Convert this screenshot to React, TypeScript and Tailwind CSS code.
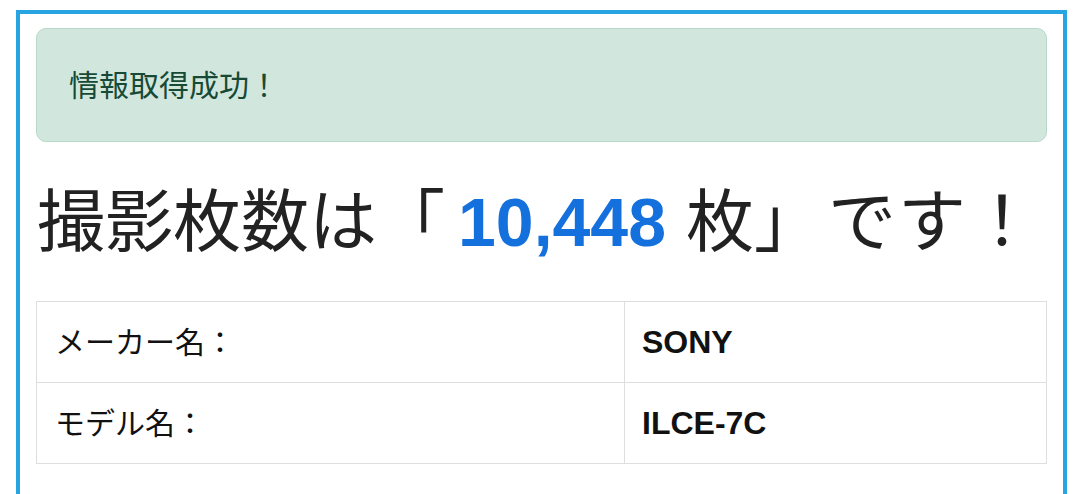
const jp = { fontFamily: '"Liberation Sans", "Noto Sans CJK JP", sans-serif' };

const rows = [
    { label: 'メーカー名：', value: 'SONY' },
    { label: 'モデル名：', value: 'ILCE-7C' },
];

export default function App() {
    return (
        <div className="w-[1080px] h-[494px] bg-white overflow-hidden pt-[10px] pl-[16px]" style={jp}>
            <div className="w-[1051px] h-[520px] border-4 border-[#27a4e2] px-[16px] pt-[14px]">
                <div className="h-[114px] flex items-center px-[32px] rounded-[10px] border border-[#b7d9c9] bg-[#d1e7dd] text-[#174a36] text-[30px]">
                    情報取得成功！
                </div>

                <div className="h-[159px] flex items-center pl-[1px] text-[68px] leading-none text-[#222222] whitespace-nowrap">
                    撮影枚数は「<span className="ml-[13px] font-bold text-[#1470dc]">10,448</span>
                    <span className="ml-[20px]">枚」</span>
                    <span className="ml-[6px] tracking-[2px]">です！</span>
                </div>

                <table className="w-full border-collapse">
                    <tbody>
                        {rows.map((r) => (
                            <tr key={r.label} className="h-[81px]">
                                <td className="w-[588px] border border-[#dedede] pl-[18px] text-[30px] text-[#111111]">
                                    {r.label}
                                </td>
                                <td className="border border-[#dedede] pl-[17px] text-[32px] font-bold text-[#111111]">
                                    {r.value}
                                </td>
                            </tr>
                        ))}
                    </tbody>
                </table>
            </div>
        </div>
    );
}
